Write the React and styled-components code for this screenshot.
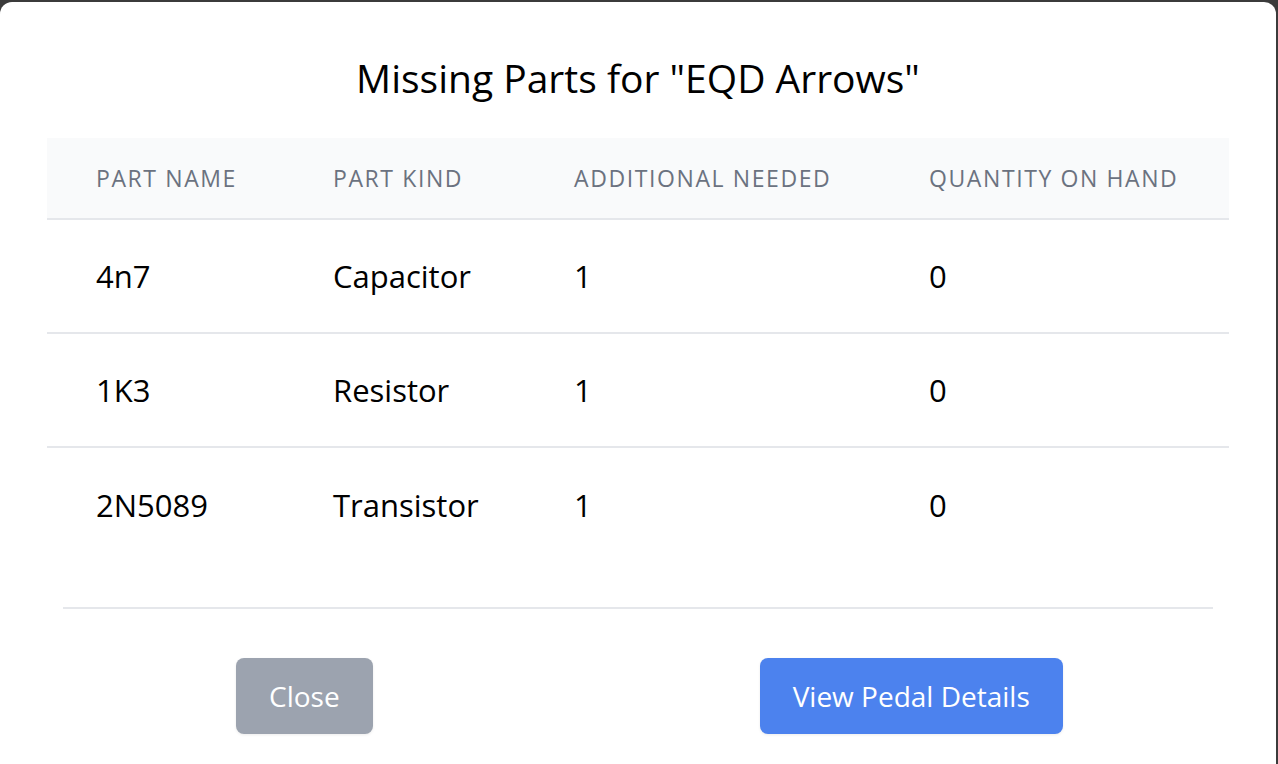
import React from 'react'
import styled, {createGlobalStyle} from 'styled-components'

const GlobalStyle = createGlobalStyle`
  html, body {
    margin: 0;
    padding: 0;
    background: #3b3b3b;
  }
  body {
    font-family: 'Open Sans', 'Noto Sans', sans-serif;
    color: #111;
  }
`

const parts = [
    {name: '4n7', kind: 'Capacitor', needed: 1, onHand: 0},
    {name: '1K3', kind: 'Resistor', needed: 1, onHand: 0},
    {name: '2N5089', kind: 'Transistor', needed: 1, onHand: 0},
]

function App() {
    return (
        <>
            <GlobalStyle/>
            <Backdrop>
                <Modal>
                    <Title>Missing Parts for "EQD Arrows"</Title>
                    <TableWrap>
                        <Table>
                            <thead>
                            <HeadRow>
                                <HeadCell $width={237}>Part Name</HeadCell>
                                <HeadCell $width={241}>Part Kind</HeadCell>
                                <HeadCell $width={355}>Additional Needed</HeadCell>
                                <HeadCell>Quantity On Hand</HeadCell>
                            </HeadRow>
                            </thead>
                            <tbody>
                            {parts.map((p) => (
                                <Row key={p.name}>
                                    <Cell>{p.name}</Cell>
                                    <Cell>{p.kind}</Cell>
                                    <Cell>{p.needed}</Cell>
                                    <Cell>{p.onHand}</Cell>
                                </Row>
                            ))}
                            </tbody>
                        </Table>
                    </TableWrap>
                    <Footer>
                        <Button $variant="gray">Close</Button>
                        <Button $variant="blue">View Pedal Details</Button>
                    </Footer>
                </Modal>
            </Backdrop>
        </>
    )
}

const Backdrop = styled.div`
  height: 764px;
  padding-top: 2px;
  padding-right: 2px;
  box-sizing: border-box;
  overflow: hidden;
`

const Modal = styled.div`
  background: #fff;
  border-radius: 12px;
  height: 774px;
  box-sizing: border-box;
  padding: 50px 47px 0;
`

const Title = styled.h2`
  margin: 0;
  text-align: center;
  font-size: 39px;
  font-weight: 400;
  line-height: 52px;
  color: #000;
`

const TableWrap = styled.div`
  margin-top: 34px;
`

const Table = styled.table`
  width: 100%;
  border-collapse: collapse;
  table-layout: fixed;
`

const HeadRow = styled.tr`
  background: #f9fafb;
  border-bottom: 2px solid #e5e7eb;
`

const HeadCell = styled.th`
  box-sizing: border-box;
  width: ${p => p.$width ? `${p.$width}px` : 'auto'};
  height: 81px;
  padding: 0 0 0 49px;
  text-align: left;
  white-space: nowrap;
  font-size: 23px;
  font-weight: 500;
  letter-spacing: 1.6px;
  text-transform: uppercase;
  color: #6b7280;
`

const Row = styled.tr`
  border-bottom: 2px solid #e5e7eb;

  &:last-child {
    border-bottom: none;
  }
`

const Cell = styled.td`
  box-sizing: border-box;
  height: 114px;
  padding: 0 0 0 49px;
  font-size: 31px;
  color: #000;
`

const Footer = styled.div`
  margin: 46px 16px 0;
  border-top: 2px solid #e5e7eb;
  padding: 49px 0 0 173px;
  display: flex;
  gap: 387px;
`

const Button = styled.button`
  height: 76px;
  padding: 0 33px;
  border: none;
  border-radius: 8px;
  font-family: inherit;
  font-size: 28px;
  font-weight: 500;
  color: #fff;
  background: ${p => p.$variant === 'blue' ? '#4c82ee' : '#9ca3af'};
  box-shadow: 0 1px 3px rgba(0, 0, 0, 0.08);
`

export default App
